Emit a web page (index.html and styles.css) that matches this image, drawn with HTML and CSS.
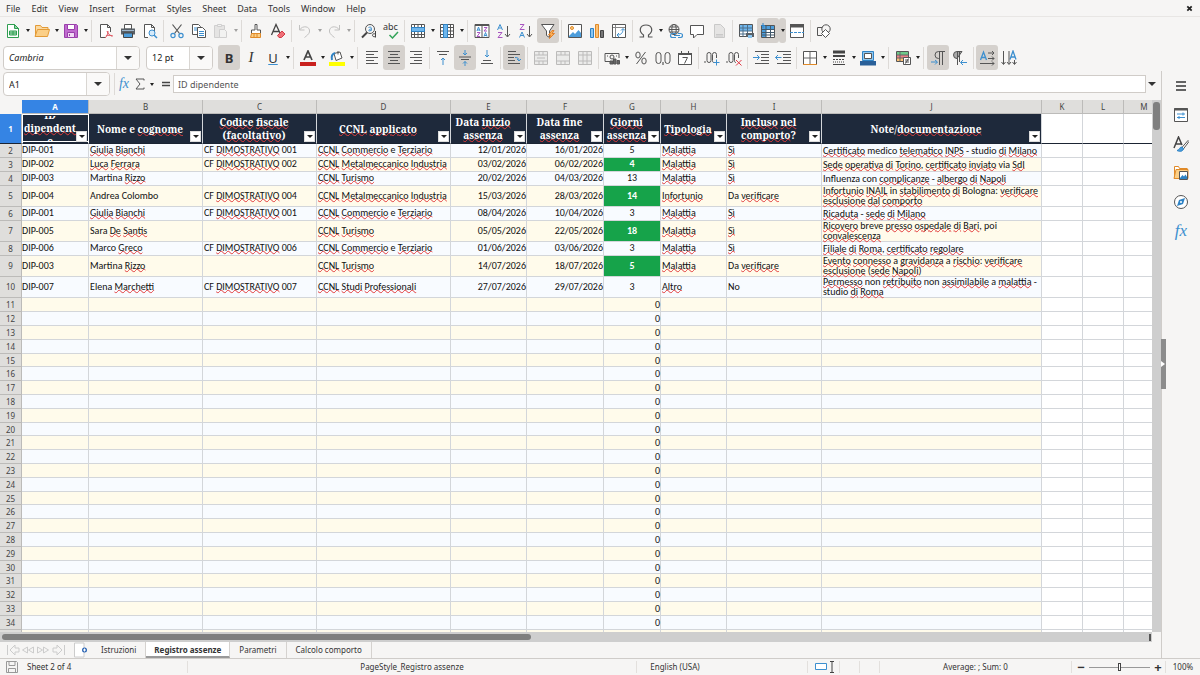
FILE: index.html
```html
<!DOCTYPE html>
<html lang="it">
<head>
<meta charset="utf-8">
<title>Registro assenze</title>
<link rel="stylesheet" href="styles.css">
</head>
<body class="app">
<nav class="menubar" aria-label="Menu">
<button class="menu">File</button><button class="menu">Edit</button><button class="menu">View</button><button class="menu">Insert</button><button class="menu">Format</button><button class="menu">Styles</button><button class="menu">Sheet</button><button class="menu">Data</button><button class="menu">Tools</button><button class="menu">Window</button><button class="menu">Help</button>
<button class="close" aria-label="Close"><svg viewBox="0 0 8 8" width="7" height="7"><path d="M1.500 1.500l5 5M6.500 1.500l-5 5" stroke="#222" stroke-width="2"/></svg></button>
</nav>

<div class="toolbar" role="toolbar" aria-label="Standard">
<button class="tool" aria-label="New"><svg viewBox="0 0 16 16"><path d="M2.500 1.500h7l4 4v9h-11z" fill="#fff" stroke="#2f9e50"/><path d="M9.500 1.500v4h4z" fill="#8fd6a5" stroke="#2f9e50"/><path d="M4.500 8h7v4h-7zM4.500 10h7M8 8v4" fill="#aee2bd" stroke="#2f9e50"/></svg></button><button class="arrow" aria-label="New options"></button>
<button class="tool" aria-label="Open"><svg viewBox="0 0 16 16"><path d="M1.500 13V2.500h5l1.500 2h6V7" fill="#fbd9a0" stroke="#e39b37"/><path d="M1 13.500L3.500 6.500h12l-2 7z" fill="#fbcf87" stroke="#e39b37"/></svg></button><button class="arrow" aria-label="Open options"></button>
<button class="tool" aria-label="Save"><svg viewBox="0 0 16 16"><path d="M1.500 1.500h12l1 1v12h-13z" fill="#c06bcf" stroke="#9a3fab"/><path d="M4.500 1.500h7v5h-7z" fill="#fff" stroke="#9a3fab"/><path d="M4.500 9.500h7v5h-7z" fill="#f1d9f5" stroke="#9a3fab"/><path d="M6 11h1v2H6z" fill="#9a3fab"/></svg></button><button class="arrow" aria-label="Save options"></button>
<span class="sep"></span>
<button class="tool" aria-label="Export as PDF"><svg viewBox="0 0 16 16" fill="none" stroke="#555"><path d="M2.500 14.500v-13h7l3 3V9M9.500 1.500v3h3M2.500 14.500h5" fill="#fff"/><path d="M9 8c1 3 3 5 6 5M10 8c0 3-1 5-3 7M8 13c2-1 4-1 6 0" stroke="#e05560"/></svg></button><button class="tool" aria-label="Print"><svg viewBox="0 0 16 16"><path d="M4.500 1.500h7V6h-7z" fill="#fff" stroke="#555"/><path d="M1 5.500h14v6H1z" fill="#596067"/><path d="M2 7h12v1H2z" fill="#9fb7cc"/><path d="M3.500 10h9v4.500h-9z" fill="#4c9ddb" stroke="#444"/></svg></button><button class="tool" aria-label="Print preview"><svg viewBox="0 0 16 16" fill="none" stroke="#555"><path d="M6 14.500H2.500v-13h7l3 3V8M9.500 1.500v3h3" fill="#fff"/><circle cx="10" cy="10" r="3" fill="#d5eafa" stroke="#3c8fcf"/><path d="M12 12l3 3" stroke="#3c8fcf" stroke-width="1.500"/></svg></button>
<span class="sep"></span>
<button class="tool" aria-label="Cut"><svg viewBox="0 0 16 16" fill="none" stroke="#555" stroke-width="1.200"><path d="M3.500 1.500l7 9M12.500 1.500l-7 9"/><g stroke="#3c8fcf"><circle cx="4" cy="12.500" r="2.100"/><circle cx="12" cy="12.500" r="2.100"/></g></svg></button><button class="tool" aria-label="Copy"><svg viewBox="0 0 16 16" fill="#fff" stroke="#555"><path d="M1.500 1.500h6l2 2v8h-8z"/><path d="M3 5h4M3 7h4" stroke="#3c8fcf"/><path d="M6.500 4.500h5l3 3v7h-8z"/><path d="M8 8.500h5M8 10.500h5M8 12.500h5" stroke="#3c8fcf"/></svg></button><button class="tool faded" aria-label="Paste" disabled><svg viewBox="0 0 16 16" stroke="#999" fill="#ccc"><path d="M1.500 2.500h10v12h-10z"/><path d="M4.500 1.500h4v2h-4z" fill="#eee"/><path d="M6.500 6.500h5l2 2v6h-7z" fill="#eee"/></svg></button><button class="arrow faded" aria-label="Paste options" disabled></button>
<span class="sep"></span>
<button class="tool" aria-label="Clone formatting"><svg viewBox="0 0 16 16" fill="none" stroke="#555"><path d="M7 1.500h2V7h3.500v3.500h-9V7H7z" fill="#fff"/><path d="M3.500 10.500h9v4h-10z" fill="#fbcf87" stroke="#e08a28"/><path d="M6 11v3M9 11v3" stroke="#e08a28"/></svg></button><button class="tool" aria-label="Clear formatting"><svg viewBox="0 0 16 16"><path d="M1.500 12L6 1.500 10 10M3 8.500h6" fill="none" stroke="#444" stroke-width="1.300"/><path d="M7.500 12.500l4.500-4.500 3 3-3.500 3.500H9z" fill="#ef7078" stroke="#d23b46"/></svg></button>
<span class="sep"></span>
<button class="tool faded" aria-label="Undo" disabled><svg viewBox="0 0 16 16" fill="none" stroke="#777"><path d="M2.500 2v5h5M2.500 7c3-5 11-4 10 2-.5 2-3 4-5 5.500"/></svg></button><button class="arrow faded" aria-label="Undo options" disabled></button>
<button class="tool faded" aria-label="Redo" disabled><svg viewBox="0 0 16 16" fill="none" stroke="#777"><path d="M13.500 2v5h-5M13.500 7c-3-5-11-4-10 2 .5 2 3 4 5 5.500"/></svg></button><button class="arrow faded" aria-label="Redo options" disabled></button>
<span class="sep"></span>
<button class="tool" aria-label="Find and replace"><svg viewBox="0 0 16 16" fill="none"><circle cx="9" cy="6" r="4.500" stroke="#555"/><path d="M6 9.500l-5 5" stroke="#444" stroke-width="2"/><path d="M7.500 4.500c3-1 3 0 3 3M10.500 6c-3 0-3.500 2-1.500 2l1.500-1" stroke="#3c8fcf"/><path d="M14.500 8v6.500M14.500 11c-4-1.500-4 4 0 2.500" stroke="#444"/></svg></button><button class="tool abc" aria-label="Spelling"><span>abc</span><svg viewBox="0 0 16 16"><path d="M6.500 12l3 3 5.500-6" fill="none" stroke="#35a45a" stroke-width="1.500"/></svg></button>
<span class="sep"></span>
<button class="tool" aria-label="Row"><svg viewBox="0 0 16 16" fill="#fff" stroke="#555"><path d="M1.500 1.500h13v13h-13z"/><path d="M4.500 1.500v13M8 1.500v13M11.500 1.500v13M1.500 11.500h13"/><path d="M1.500 4.500h13v4h-13z" fill="#6fb6ec" stroke="#2f83c5"/></svg></button><button class="arrow" aria-label="Row options"></button>
<button class="tool" aria-label="Column"><svg viewBox="0 0 16 16" fill="#fff" stroke="#555"><path d="M1.500 1.500h13v13h-13z"/><path d="M1.500 4.500h13M1.500 8h13M1.500 11.500h13M11.500 1.500v13"/><path d="M4.500 1.500h4v13h-4z" fill="#6fb6ec" stroke="#2f83c5"/></svg></button><button class="arrow" aria-label="Column options"></button>
<span class="sep"></span>
<button class="tool" aria-label="Sort"><svg viewBox="0 0 16 16" fill="none"><path d="M1 1.500h14v13H1zM8 3v12" fill="#fff" stroke="#555"/><path d="M1 2h14" stroke="#555" stroke-width="2"/><path d="M3 8l1.500-4L6 8M3.500 7h2M10 13.500l1.500-4 1.500 4M10.500 12.500h2" stroke="#3c8fcf"/><path d="M3 9.500h3l-3 4h3M10 4.500h3l-3 3.500h3" stroke="#a855c0"/></svg></button><button class="tool" aria-label="Sort ascending"><svg viewBox="0 0 16 16" fill="none"><path d="M1.500 7L4 1.500 6.500 7M2.500 5h3" stroke="#3c8fcf"/><path d="M2 9.500h4l-4 5h4.500" stroke="#a855c0"/><path d="M11.500 3v10.500M9 11l2.500 3 2.500-3" stroke="#555"/></svg></button><button class="tool" aria-label="Sort descending"><svg viewBox="0 0 16 16" fill="none"><path d="M1.500 14.500L4 9l2.500 5.500M2.500 12.500h3" stroke="#3c8fcf"/><path d="M2 1.500h4l-4 5h4.500" stroke="#a855c0"/><path d="M11.500 3v10.500M9 11l2.500 3 2.500-3" stroke="#555"/></svg></button><button class="tool on" aria-label="AutoFilter" aria-pressed="true"><svg viewBox="0 0 16 16"><path d="M1.500 1.500h12.500L9.500 8v6.500l-3-2V8z" fill="#fff" stroke="#555"/><path d="M12 7.500L8.500 12h2l-1 3.500 5-5h-2.500l2-3z" fill="#fbb25c" stroke="#e0802a"/></svg></button>
<span class="sep"></span>
<button class="tool" aria-label="Image"><svg viewBox="0 0 16 16"><path d="M1.500 1.500h13v13h-13z" fill="#fff" stroke="#555"/><circle cx="5" cy="5" r="1.500" fill="#fbcf87" stroke="#e08a28"/><path d="M2 13l4-4 2 2 3.500-4L14 10v4H2z" fill="#4c9ddb"/></svg></button><button class="tool" aria-label="Chart"><svg viewBox="0 0 16 16"><path d="M1.500 5.500h3v9h-3z" fill="#8cc6f0" stroke="#2f83c5"/><path d="M6.500 1.500h3v13h-3z" fill="#fbc176" stroke="#e08a28"/><path d="M11.500 7.500h3v7h-3z" fill="#777" stroke="#444"/></svg></button><button class="tool" aria-label="Pivot table"><svg viewBox="0 0 16 16" fill="none"><path d="M1.500 1.500h13v13h-13z" fill="#fff" stroke="#555"/><path d="M2 4.500h12M4.500 2v12" stroke="#888"/><path d="M6 12c4 0 6-2 6-6M10 7.500l2-2 2 2M8 10l-2 2 2 2" stroke="#3c8fcf"/></svg></button>
<span class="sep"></span>
<button class="tool" aria-label="Special character"><svg viewBox="0 0 16 16"><path d="M1.500 14h4v-2C0 8 2 2 8 2s8 6 2.500 10v2h4" fill="none" stroke="#555" stroke-width="1.200"/></svg></button><button class="arrow" aria-label="Special character options"></button>
<button class="tool" aria-label="Hyperlink"><svg viewBox="0 0 16 16" fill="none" stroke="#555"><circle cx="7" cy="6.500" r="5"/><ellipse cx="7" cy="6.500" rx="2.200" ry="5"/><path d="M2 6.500h10M3 4h8M3 9h8"/><path d="M9 10.500H5.500a2 2 0 0 0 0 4H9M11 10.500h2.500a2 2 0 0 1 0 4H11M7 12.500h6" stroke="#3c8fcf" stroke-width="1.200"/></svg></button><button class="tool" aria-label="Comment"><svg viewBox="0 0 16 16"><path d="M1.500 2.500h13v9H8L4.500 15v-3.500h-3z" fill="#fff" stroke="#555"/></svg></button><button class="tool faded" aria-label="Headers and footers" disabled><svg viewBox="0 0 16 16"><path d="M3.500 1.500h6l4 4v9h-10z" fill="#ccc" stroke="#888"/><path d="M5 11.500h7M5 13h7" stroke="#888"/></svg></button>
<span class="sep"></span>
<button class="tool" aria-label="Define print area"><svg viewBox="0 0 16 16"><path d="M1.500 1.500h13v12h-13z" fill="#fff" stroke="#555"/><path d="M2 2h12v6H2z" fill="#6fb6ec"/><path d="M1.500 5h13M1.500 8h13M1.500 11h13M5 1.500v12M9.500 1.500v12" stroke="#4c6f8b"/><path d="M8 10h8v4H8z" fill="#596067"/><path d="M10 12h4v3h-4z" fill="#8cc6f0"/></svg></button><button class="tool on" aria-label="Freeze rows and columns" aria-pressed="true"><svg viewBox="0 0 16 16"><path d="M1.500 2.500h13v12h-13z" fill="#fff" stroke="#555"/><path d="M2 3h12v3H2zM2 6h4v8H2z" fill="#4c9ddb"/><path d="M1.500 6.500h13M1.500 9.500h13M1.500 12h13M6 2.500v12M10.500 2.500v12" stroke="#40586b"/><path d="M3 0v5M1 2.500h4" stroke="#2f83c5"/></svg></button><button class="arrow on" aria-label="Freeze options"></button>
<button class="tool" aria-label="Split window"><svg viewBox="0 0 16 16"><path d="M1.500 1.500h13v13h-13z" fill="#fff" stroke="#555"/><path d="M1 1h14v3.500H1z" fill="#555"/><path d="M1 9.500h14" stroke="#3c8fcf" stroke-dasharray="3 1"/></svg></button>
<span class="sep"></span>
<button class="tool" aria-label="Draw functions"><svg viewBox="0 0 16 16" fill="none" stroke="#555"><path d="M6 12.500H1.500v-8h5"/><circle cx="10" cy="6" r="4.200"/><path d="M9.500 6.500l4 4-4 4-4-4z" fill="#fff"/></svg></button>
</div>

<div class="toolbar" role="toolbar" aria-label="Formatting">
<div class="combo font-name"><input aria-label="Font name" value="Cambria"><button class="drop" aria-label="Font list"></button></div>
<div class="combo font-size"><input aria-label="Font size" value="12 pt"><button class="drop" aria-label="Size list"></button></div>
<button class="tool on letter bold" aria-pressed="true">B</button><button class="tool letter italic">I</button><button class="tool letter underline">U</button><button class="arrow" aria-label="Underline options"></button>
<span class="sep"></span>
<button class="tool" aria-label="Font color"><svg viewBox="0 0 16 16"><path d="M4 10l4-9 4 9M5.500 7h5" fill="none" stroke="#444" stroke-width="1.700"/><path d="M0 12h16v4H0z" fill="#c9211e"/></svg></button><button class="arrow" aria-label="Font color options"></button>
<button class="tool" aria-label="Background color"><svg viewBox="0 0 16 16"><path d="M5 3.500l6-1.500 2 6-6 2.500z" fill="#fff" stroke="#555"/><path d="M9 4.500V1" stroke="#555"/><path d="M3 10C2 6 3 4 6 3" fill="none" stroke="#2f83c5" stroke-width="2"/><path d="M0 12h16v4H0z" fill="#ff0"/></svg></button><button class="arrow" aria-label="Background color options"></button>
<span class="sep"></span>
<button class="tool" aria-label="Align left"><svg viewBox="0 0 16 16" stroke="#555"><path d="M2 1.500h12M2 4.500h8M2 7.500h12M2 10.500h8M2 13.500h12"/></svg></button><button class="tool on" aria-label="Align center" aria-pressed="true"><svg viewBox="0 0 16 16" stroke="#555"><path d="M2 1.500h12M4 4.500h8M2 7.500h12M4 10.500h8M2 13.500h12"/></svg></button><button class="tool" aria-label="Align right"><svg viewBox="0 0 16 16" stroke="#555"><path d="M2 1.500h12M6 4.500h8M2 7.500h12M6 10.500h8M2 13.500h12"/></svg></button>
<span class="sep"></span>
<button class="tool" aria-label="Align top"><svg viewBox="0 0 16 16" fill="none"><path d="M2 1.500h12M4 4.500h8" stroke="#555"/><path d="M8 15V8M6 10l2-2 2 2" stroke="#3c8fcf"/></svg></button><button class="tool on" aria-label="Center vertically" aria-pressed="true"><svg viewBox="0 0 16 16" fill="none"><path d="M2 7h12M4 9.500h8" stroke="#555"/><path d="M8 0v5M6 3l2 2 2-2M8 16v-4.500M6 13.500l2-2 2 2" stroke="#3c8fcf"/></svg></button><button class="tool" aria-label="Align bottom"><svg viewBox="0 0 16 16" fill="none"><path d="M4 10.500h8M2 13.500h12" stroke="#555"/><path d="M8 0v7M6 5l2 2 2-2" stroke="#3c8fcf"/></svg></button>
<span class="sep"></span>
<button class="tool on" aria-label="Wrap text" aria-pressed="true"><svg viewBox="0 0 16 16" fill="none"><path d="M2 1.500h8M2 4.500h12M2 7.500h6M2 10.500h7M2 13.500h12" stroke="#555"/><path d="M9 7.500c3 0 4 1 4 3.500M11 9l2 2 2-2" stroke="#3c8fcf"/></svg></button>
<span class="sep"></span>
<button class="tool faded" aria-label="Merge and center" disabled><svg viewBox="0 0 16 16" fill="#ddd" stroke="#666"><path d="M1.500 1.500h13v13h-13zM1.500 5h13M1.500 11h13M6 1.500V5M10 1.500V5M6 11v3M10 11v3M4 8h8"/></svg></button><button class="tool faded" aria-label="Merge cells" disabled><svg viewBox="0 0 16 16" fill="#ddd" stroke="#666"><path d="M1.500 1.500h13v13h-13zM1.500 5h13M1.500 11h13M6 1.500V5M10 1.500V5M6 11v3M10 11v3"/></svg></button><button class="tool faded" aria-label="Unmerge cells" disabled><svg viewBox="0 0 16 16" fill="#ddd" stroke="#666"><path d="M1.500 1.500h13v13h-13zM1.500 5h13M1.500 11h13M6 1.500v13M10 1.500v13"/></svg></button>
<span class="sep"></span>
<button class="tool" aria-label="Currency"><svg viewBox="0 0 16 16" fill="none" stroke="#555"><path d="M9 11.500H1V3.500h14V8"/><circle cx="8" cy="7" r="2"/><path d="M3.500 5.500v1M12.500 5.500v1"/><path d="M6 11h3v3H6zM9.500 9h2.500v5H9.500zM13 10.500h2.500V14H13z" fill="#666"/></svg></button><button class="arrow" aria-label="Currency options"></button>
<button class="tool" aria-label="Percent"><svg viewBox="0 0 16 16" fill="none" stroke="#555"><ellipse cx="5" cy="5" rx="2.200" ry="3"/><ellipse cx="11" cy="11" rx="2.200" ry="3"/><path d="M12.500 2l-9 12"/></svg></button><button class="tool" aria-label="Number"><svg viewBox="0 0 16 16" fill="none" stroke="#555"><rect x="1" y="2.500" width="5" height="11" rx="2.500"/><rect x="10" y="2.500" width="5" height="11" rx="2.500"/><path d="M8 12v3" stroke-width="1.200"/></svg></button><button class="tool" aria-label="Date"><svg viewBox="0 0 16 16" fill="none" stroke="#555"><path d="M1.500 3.500h13v11h-13z" fill="#fff"/><path d="M1 4h14" stroke-width="2"/><path d="M4.500 1v3M11.500 1v3M5.500 7.500h5l-3 6"/></svg></button>
<span class="sep"></span>
<button class="tool" aria-label="Add decimal place"><svg viewBox="0 0 16 16" fill="none" stroke="#555"><path d="M1 11v2"/><rect x="3" y="2.500" width="4" height="10" rx="2"/><path d="M12.500 8V4.500a2 2 0 0 0-4 0v6c0 2 1 2 1.500 2"/><path d="M9.500 12.500h6M12.500 9.500v6" stroke="#3c8fcf"/></svg></button><button class="tool" aria-label="Delete decimal place"><svg viewBox="0 0 16 16" fill="none" stroke="#555"><path d="M1 11v2"/><rect x="3" y="2.500" width="4" height="10" rx="2"/><path d="M12.500 8V4.500a2 2 0 0 0-4 0v6c0 2 1 2 1.500 2"/><path d="M10 10l5.500 5.500M15.500 10L10 15.500" stroke="#e03b46"/></svg></button>
<span class="sep"></span>
<button class="tool" aria-label="Increase indent"><svg viewBox="0 0 16 16" fill="none"><path d="M2 1.500h14M8 4.500h8M8 7.500h8M8 10.500h8M2 13.500h14" stroke="#555"/><path d="M0 7.500h6M4 5l2.500 2.500L4 10" stroke="#3c8fcf"/></svg></button><button class="tool" aria-label="Decrease indent"><svg viewBox="0 0 16 16" fill="none"><path d="M2 1.500h14M8 4.500h8M8 7.500h8M8 10.500h8M2 13.500h14" stroke="#555"/><path d="M.5 7.500h6M3 5L.5 7.500 3 10" stroke="#3c8fcf"/></svg></button>
<span class="sep"></span>
<button class="tool" aria-label="Borders"><svg viewBox="0 0 16 16" fill="none"><path d="M1.500 1.500h13v13h-13z" fill="#fff" stroke="#555"/><path d="M8 2v12M2 8h12" stroke="#666"/><path d="M1 14.500h14" stroke="#e08a28"/></svg></button><button class="arrow" aria-label="Border options"></button>
<button class="tool" aria-label="Border style"><svg viewBox="0 0 16 16" stroke="#444"><path d="M2 2h12" stroke-width="3"/><path d="M2 6h12" stroke-width="2"/><path d="M2 9.500h12" stroke-dasharray="2 1"/><path d="M2 12h12" stroke-dasharray="1 1"/><path d="M2 14.500h12"/></svg></button><button class="arrow" aria-label="Border style options"></button>
<button class="tool" aria-label="Border color"><svg viewBox="0 0 16 16"><path d="M2.500 1.500h11v9h-11z" fill="#8cc6f0" stroke="#2f83c5"/><path d="M4.500 3.500h7v5h-7z" fill="#fff" stroke="#555"/><path d="M0 11h16v4.500H0z" fill="#2a6099"/></svg></button><button class="arrow" aria-label="Border color options"></button>
<span class="sep"></span>
<button class="tool" aria-label="Conditional formatting"><svg viewBox="0 0 16 16"><path d="M1.500 1.500h12v10h-12z" fill="#fff" stroke="#555"/><path d="M2 2h11v3H2z" fill="#6ec98a"/><path d="M2 5h11v3H2z" fill="#ef8088"/><path d="M2 8h11v3H2z" fill="#fbc176"/><path d="M1.500 5h12M1.500 8h12M5 1.500v10" stroke="#666"/><path d="M8.500 7.500h7v7h-7z" fill="#fff" stroke="#555"/><path d="M10 10h4M10 12h4M13.500 8.500l-3 5" stroke="#555"/></svg></button><button class="arrow" aria-label="Conditional options"></button>
<span class="sep"></span>
<button class="tool on" aria-label="Left to right" aria-pressed="true"><svg viewBox="0 0 16 16" fill="none" stroke="#555"><path d="M9.500 15V1.500M12.500 15V1.500M15 1.500H8.500a3.500 3.500 0 0 0 0 7H9"/><path d="M1 12h6M5 10l2.500 2L5 14.500" stroke="#3c8fcf"/></svg></button><button class="tool" aria-label="Right to left"><svg viewBox="0 0 16 16" fill="none" stroke="#555"><path d="M5.500 15V1.500M7.500 12V1.500M10 1.500H5a3.500 3.500 0 0 0 0 7z" fill="#aaa"/><path d="M9 12.500h6M11 10l-2.500 2.500L11 15" stroke="#3c8fcf"/></svg></button>
<span class="sep"></span>
<button class="tool on" aria-label="Text left to right" aria-pressed="true"><svg viewBox="0 0 16 16" fill="none" stroke="#555"><path d="M1.500 10L4.500 2l3 8M2.500 7.500h4" stroke="#3c8fcf" stroke-width="1.300"/><path d="M9 3h6M13 1l2 2-2 2M9 8.500h6M13 6.500l2 2-2 2M1 13.500h14M13 11.500l2 2-2 2"/></svg></button><button class="tool" aria-label="Text top to bottom"><svg viewBox="0 0 16 16" fill="none" stroke="#555"><path d="M9 9.500L12 1l3 8.500M10 7h4" stroke="#3c8fcf" stroke-width="1.300"/><path d="M2.500 1v13M.5 12l2 2.500 2-2.500M8 1v13M6 12l2 2.500 2-2.500M13.500 10v4M11.500 12l2 2.500 2-2.500"/></svg></button>
</div>

<div class="workspace">
<main class="document">
<div class="formula-bar">
<div class="combo name-box"><input aria-label="Name box" value="A1"><button class="drop" aria-label="Cell names"></button></div>
<span class="sep"></span>
<button class="fx" aria-label="Function wizard"><i>f</i><i>x</i></button>
<button class="sigma" aria-label="Select function"><svg viewBox="0 0 10 12"><path d="M9 2.500V1H1l4 5-4 5h8V9.500" fill="none" stroke="#555"/></svg></button><button class="arrow" aria-label="Function options"></button>
<button class="equals" aria-label="Formula"><svg viewBox="0 0 10 8"><path d="M1 2.500h8M1 5.500h8" stroke="#444" stroke-width="1.500"/></svg></button>
<input class="formula" aria-label="Input line" value="ID dipendente"><button class="drop plain" aria-label="Expand formula bar"></button>
</div>
<div class="grid-area">
<div class="grid">
<table class="sheet">
<colgroup><col class="c-row"><col class="c-a"><col class="c-b"><col class="c-c"><col class="c-d"><col class="c-e"><col class="c-f"><col class="c-g"><col class="c-h"><col class="c-i"><col class="c-j"><col class="c-k"><col class="c-k"><col class="c-k"></colgroup>
<thead><tr><td class="corner"></td><th class="current">A</th><th>B</th><th>C</th><th>D</th><th>E</th><th>F</th><th>G</th><th>H</th><th>I</th><th>J</th><th>K</th><th>L</th><th>M</th></tr></thead>
<tbody>
<tr class="titles"><th class="current">1</th><td class="active"><div class="title">ID <u>dipendent</u> e</div><button class="filter" aria-label="Filter A"></button></td><td><div class="title">Nome e <u>cognome</u></div><button class="filter" aria-label="Filter B"></button></td><td><div class="title"><u>Codice</u> <u>fiscale</u> (<u>facoltativo</u>)</div><button class="filter" aria-label="Filter C"></button></td><td><div class="title"><u>CCNL</u> <u>applicato</u></div><button class="filter" aria-label="Filter D"></button></td><td><div class="title">Data <u>inizio</u> <u>assenza</u></div><button class="filter" aria-label="Filter E"></button></td><td><div class="title">Data fine <u>assenza</u></div><button class="filter" aria-label="Filter F"></button></td><td><div class="title"><u>Giorni</u> <u>assenza</u></div><button class="filter" aria-label="Filter G"></button></td><td><div class="title"><u>Tipologia</u></div><button class="filter" aria-label="Filter H"></button></td><td><div class="title"><u>Incluso</u> <u>nel</u> <u>comporto</u>?</div><button class="filter" aria-label="Filter I"></button></td><td><div class="title">Note/<u>documentazione</u></div><button class="filter" aria-label="Filter J"></button></td><td><td><td></tr>
<tr><th>2<td>DIP-001<td><u>Giulia</u> <u>Bianchi</u><td>CF <u>DIMOSTRATIVO</u> 001<td><u>CCNL</u> <u>Commercio</u> e <u>Terziario</u><td>12/01/2026<td>16/01/2026<td>5<td><u>Malattia</u><td><u>Sì</u><td><u>Certificato</u> medico <u>telematico</u> <u>INPS</u> - studio <u>di</u> <u>Milano</u><td><td><td></tr>
<tr><th>3<td>DIP-002<td><u>Luca</u> <u>Ferrara</u><td>CF <u>DIMOSTRATIVO</u> 002<td><u>CCNL</u> <u>Metalmeccanico</u> <u>Industria</u><td>03/02/2026<td>06/02/2026<td class="flag">4<td><u>Malattia</u><td><u>Sì</u><td><u>Sede</u> <u>operativa</u> <u>di</u> <u>Torino</u>, <u>certificato</u> <u>inviato</u> via <u>SdI</u><td><td><td></tr>
<tr><th>4<td>DIP-003<td>Martina <u>Rizzo</u><td><td><u>CCNL</u> <u>Turismo</u><td>20/02/2026<td>04/03/2026<td>13<td><u>Malattia</u><td><u>Sì</u><td>Influenza con <u>complicanze</u> - <u>albergo</u> <u>di</u> <u>Napoli</u><td><td><td></tr>
<tr class="tall"><th>5<td>DIP-004<td>Andrea Colombo<td>CF <u>DIMOSTRATIVO</u> 004<td><u>CCNL</u> <u>Metalmeccanico</u> <u>Industria</u><td>15/03/2026<td>28/03/2026<td class="flag">14<td><u>Infortunio</u><td>Da <u>verificare</u><td><u>Infortunio</u> <u>INAIL</u> in <u>stabilimento</u> <u>di</u> Bologna: <u>verificare</u> <u>esclusione</u> <u>dal</u> <u>comporto</u><td><td><td></tr>
<tr><th>6<td>DIP-001<td><u>Giulia</u> <u>Bianchi</u><td>CF <u>DIMOSTRATIVO</u> 001<td><u>CCNL</u> <u>Commercio</u> e <u>Terziario</u><td>08/04/2026<td>10/04/2026<td>3<td><u>Malattia</u><td><u>Sì</u><td><u>Ricaduta</u> - <u>sede</u> <u>di</u> <u>Milano</u><td><td><td></tr>
<tr class="tall"><th>7<td>DIP-005<td>Sara <u>De</u> <u>Santis</u><td><td><u>CCNL</u> <u>Turismo</u><td>05/05/2026<td>22/05/2026<td class="flag">18<td><u>Malattia</u><td><u>Sì</u><td><u>Ricovero</u> breve <u>presso</u> <u>ospedale</u> <u>di</u> <u>Bari</u>, poi <u>convalescenza</u><td><td><td></tr>
<tr><th>8<td>DIP-006<td>Marco <u>Greco</u><td>CF <u>DIMOSTRATIVO</u> 006<td><u>CCNL</u> <u>Commercio</u> e <u>Terziario</u><td>01/06/2026<td>03/06/2026<td>3<td><u>Malattia</u><td><u>Sì</u><td><u>Filiale</u> <u>di</u> <u>Roma</u>, <u>certificato</u> <u>regolare</u><td><td><td></tr>
<tr class="tall"><th>9<td>DIP-003<td>Martina <u>Rizzo</u><td><td><u>CCNL</u> <u>Turismo</u><td>14/07/2026<td>18/07/2026<td class="flag">5<td><u>Malattia</u><td>Da <u>verificare</u><td><u>Evento</u> <u>connesso</u> a <u>gravidanza</u> a <u>rischio</u>: <u>verificare</u> <u>esclusione</u> (<u>sede</u> <u>Napoli</u>)<td><td><td></tr>
<tr class="tall"><th>10<td>DIP-007<td>Elena <u>Marchetti</u><td>CF <u>DIMOSTRATIVO</u> 007<td><u>CCNL</u> <u>Studi</u> <u>Professionali</u><td>27/07/2026<td>29/07/2026<td>3<td><u>Altro</u><td>No<td><u>Permesso</u> non <u>retribuito</u> non <u>assimilabile</u> a <u>malattia</u> - studio <u>di</u> <u>Roma</u><td><td><td></tr>
</tbody>
<tbody class="blank">
<tr><th>11<td><td><td><td><td><td><td>0<td><td><td><td><td><td></tr>
<tr><th>12<td><td><td><td><td><td><td>0<td><td><td><td><td><td></tr>
<tr><th>13<td><td><td><td><td><td><td>0<td><td><td><td><td><td></tr>
<tr><th>14<td><td><td><td><td><td><td>0<td><td><td><td><td><td></tr>
<tr><th>15<td><td><td><td><td><td><td>0<td><td><td><td><td><td></tr>
<tr><th>16<td><td><td><td><td><td><td>0<td><td><td><td><td><td></tr>
<tr><th>17<td><td><td><td><td><td><td>0<td><td><td><td><td><td></tr>
<tr><th>18<td><td><td><td><td><td><td>0<td><td><td><td><td><td></tr>
<tr><th>19<td><td><td><td><td><td><td>0<td><td><td><td><td><td></tr>
<tr><th>20<td><td><td><td><td><td><td>0<td><td><td><td><td><td></tr>
<tr><th>21<td><td><td><td><td><td><td>0<td><td><td><td><td><td></tr>
<tr><th>22<td><td><td><td><td><td><td>0<td><td><td><td><td><td></tr>
<tr><th>23<td><td><td><td><td><td><td>0<td><td><td><td><td><td></tr>
<tr><th>24<td><td><td><td><td><td><td>0<td><td><td><td><td><td></tr>
<tr><th>25<td><td><td><td><td><td><td>0<td><td><td><td><td><td></tr>
<tr><th>26<td><td><td><td><td><td><td>0<td><td><td><td><td><td></tr>
<tr><th>27<td><td><td><td><td><td><td>0<td><td><td><td><td><td></tr>
<tr><th>28<td><td><td><td><td><td><td>0<td><td><td><td><td><td></tr>
<tr><th>29<td><td><td><td><td><td><td>0<td><td><td><td><td><td></tr>
<tr><th>30<td><td><td><td><td><td><td>0<td><td><td><td><td><td></tr>
<tr><th>31<td><td><td><td><td><td><td>0<td><td><td><td><td><td></tr>
<tr><th>32<td><td><td><td><td><td><td>0<td><td><td><td><td><td></tr>
<tr><th>33<td><td><td><td><td><td><td>0<td><td><td><td><td><td></tr>
<tr><th>34<td><td><td><td><td><td><td>0<td><td><td><td><td><td></tr>
<tr><th><td><td><td><td><td><td><td><td><td><td><td><td><td></tr>
</tbody>
</table>
</div>
<div class="v-scroll"><div class="v-thumb"></div></div>
</div>
<div class="h-scroll"><div class="h-thumb"></div><div class="h-grip"></div></div>
<div class="tabs">
<div class="tab-nav"><button aria-label="First sheet"><svg viewBox="0 0 14 12"><path d="M1 1v10M3.500 6l5-5v3h4v4h-4v3z"/></svg></button><button aria-label="Previous sheet"><svg viewBox="0 0 14 12"><path d="M1 6l5-3v6zM7 6l5-3v6z"/></svg></button><button aria-label="Next sheet"><svg viewBox="0 0 14 12"><path d="M12 6L7 3v6zM6 6L1 3v6z"/></svg></button><button aria-label="Last sheet"><svg viewBox="0 0 14 12"><path d="M13 1v10M10.500 6l-5-5v3h-4v4h4v3z"/></svg></button></div>
<button class="add" aria-label="Add sheet"><svg viewBox="0 0 14 16"><path d="M.5 1v14H10V1z" fill="#fff" stroke="#ccc"/><circle cx="10.500" cy="8" r="2.500" fill="#2a64b4"/><path d="M9 8h3M10.500 6.500v3" stroke="#fff"/></svg></button>
<button class="tab">Istruzioni</button><button class="tab chosen">Registro assenze</button><button class="tab">Parametri</button><button class="tab">Calcolo comporto</button>
</div>
</main>
<aside class="sidebar" aria-label="Sidebar">
<button class="side-handle" aria-label="Hide sidebar"><svg viewBox="0 0 4 6" width="4" height="6"><path d="M0 0l4 3-4 3z" fill="#fff"/></svg></button>
<button class="side" aria-label="Sidebar settings"><svg viewBox="0 0 16 16"><path d="M3 4h10M3 8h10M3 12h10" stroke="#333" stroke-width="1.500"/></svg></button>
<button class="side" aria-label="Properties"><svg viewBox="0 0 16 16" fill="none"><path d="M1.500 1.500h13v13h-13z" fill="#fff" stroke="#555"/><path d="M1 2.500h14" stroke="#555" stroke-width="2"/><path d="M4 7h8M10 5.500v3M4 10.500h8M6 9v3" stroke="#3c8fcf"/></svg></button>
<button class="side" aria-label="Styles"><svg viewBox="0 0 16 16" fill="none"><path d="M1 12L5.500 1 9 9M2.500 8H8" stroke="#444" stroke-width="1.500"/><path d="M15 4.500L8.500 12l1.500 1.500L16 5.500z" fill="#fff" stroke="#555"/><path d="M9 11c-3 0-2 3-5 3.500 3 1.500 6 1 6.500-2z" fill="#4c9ddb" stroke="#2f83c5"/></svg></button>
<button class="side" aria-label="Gallery"><svg viewBox="0 0 16 16"><path d="M1.500 14V1.500h4l1 2h8" fill="#fff" stroke="#e08a28"/><path d="M1 13.500l2-9h12v9z" fill="#fbcf87" stroke="#e08a28"/><path d="M6.500 6.500h8v8h-8z" fill="#fff" stroke="#555"/><path d="M7 13l2.500-3 1.500 1.500 1.500-2L14 12v2H7z" fill="#2f83c5"/></svg></button>
<button class="side" aria-label="Navigator"><svg viewBox="0 0 16 16"><circle cx="8" cy="8" r="6.500" fill="#fff" stroke="#555"/><path d="M12 4l-2 6-6 2 2-6z" fill="#2f83c5"/><circle cx="8" cy="8" r="1" fill="#fff"/></svg></button>
<button class="side fx" aria-label="Functions"><i>f</i><i>x</i></button>
</aside>
</div>

<footer class="status">
<span class="s-save"><svg viewBox="0 0 12 12"><path d="M.5 .5h10l1 1v10H.5zM3 .5v4h6v-4M2.500 11.500v-4h7v4" fill="none" stroke="#999"/></svg></span>
<span class="s-sheet">Sheet 2 of 4</span>
<span class="s-style">PageStyle_Registro assenze</span>
<span class="s-lang">English (USA)</span>
<span class="s-ins"></span>
<span class="s-sel"><svg viewBox="0 0 20 12"><path d="M.5 2.500h11v6H.5z" fill="#fff" stroke="#3c8fcf"/><path d="M15 .5h4M15 11.500h4M17 .5v11" stroke="#444"/></svg></span>
<span class="s-gap"></span><span class="s-gap"></span>
<span class="s-sum">Average: ; Sum: 0</span>
<span class="s-zoom"><button aria-label="Zoom out">−</button><input type="range" aria-label="Zoom" min="0" max="100" value="50"><button aria-label="Zoom in">+</button></span>
<span class="s-pct">100%</span>
</footer>
</body>
</html>
```

FILE: styles.css
```css
* { box-sizing: border-box; }

.app {
  margin: 0;
  height: 100vh;
  display: flex;
  flex-direction: column;
  overflow: hidden;
  background: #f6f5f4;
  color: #333;
  font-family: "Noto Sans", "Open Sans", sans-serif;
  font-size: 9px;
}

button, input {
  margin: 0;
  padding: 0;
  border: 0;
  background: none;
  color: inherit;
  font: inherit;
}

svg { display: block; }

/* Menu bar */
.menubar {
  flex: none;
  display: flex;
  align-items: center;
  height: 17px;
  padding-left: 1px;
  border-bottom: 1px solid #e8e6e4;
}
.menu { padding: 0 6px 0 5px; }
.close { margin-left: auto; padding-right: 7px; }

/* Toolbars */
.toolbar {
  flex: none;
  display: flex;
  align-items: center;
  height: 27px;
  padding-left: 2px;
}
.tool {
  flex: none;
  display: flex;
  align-items: center;
  justify-content: center;
  position: relative;
  width: 22px;
  height: 25px;
}
.tool svg { width: 16px; height: 16px; }
.on { background: #d5d1cd; border-radius: 3px; }
.faded { opacity: 0.4; }
.arrow {
  flex: none;
  display: flex;
  align-items: center;
  justify-content: center;
  width: 7px;
  height: 25px;
}
.arrow::after {
  content: "";
  border: 2px solid transparent;
  border-top: 3px solid #222;
  border-bottom: 0;
}
.sep {
  flex: none;
  width: 5px;
  height: 22px;
  background: linear-gradient(#dddad7, #dddad7) 2px 0 / 1px 100% no-repeat;
}
.arrow + .sep { width: 6px; }
.abc span {
  position: absolute;
  top: 2px;
  left: 3px;
  font-size: 9px;
}
.letter { font-size: 13px; }
.bold { font-weight: 700; }
.italic { font-family: "Liberation Serif", serif; font-style: italic; font-size: 15px; }
.underline { text-decoration: underline; text-decoration-color: #3c8fcf; }

.combo {
  flex: none;
  display: flex;
  height: 24px;
  border: 1px solid #d0ccc8;
  border-radius: 4px;
  background: #fff;
  overflow: hidden;
}
.combo input {
  flex: 1;
  min-width: 0;
  padding-left: 5px;
  color: #222;
}
.drop {
  flex: none;
  display: flex;
  align-items: center;
  justify-content: center;
  width: 23px;
  border-left: 1px solid #d9d6d2;
  background: #faf9f8;
}
.drop::after {
  content: "";
  border: 4px solid transparent;
  border-top-color: #333;
  border-bottom: 0;
}
.plain { width: 12px; border: 0; background: none; }
.font-name { width: 137px; margin: 0 6px 0 1px; }
.font-name input { font-style: italic; }
.font-size { width: 67px; margin-right: 5px; }

/* Document and sidebar */
.workspace { flex: 1; min-height: 0; display: flex; }
.document { flex: 1; min-width: 0; display: flex; flex-direction: column; }
.formula-bar {
  flex: none;
  display: flex;
  align-items: center;
  height: 29px;
  padding: 0 3px 3px;
}
.name-box { width: 107px; margin-right: 2px; }
.fx {
  color: #3c8fcf;
  font-family: "Liberation Serif", serif;
  font-size: 14px;
  line-height: 14px;
}
.formula-bar .fx { width: 14px; }
.sigma { width: 17px; padding: 0 4px; }
.sigma svg { width: 10px; height: 12px; }
.equals { width: 18px; padding-left: 6px; }
.equals svg { width: 10px; height: 8px; }
.formula {
  flex: 1;
  min-width: 0;
  height: 18px;
  padding-left: 4px;
  border: 1px solid #d0ccc8;
  background: #fff;
  color: #555;
}

.grid-area { flex: 1; min-height: 0; display: flex; }
.grid { flex: 1; min-width: 0; overflow: hidden; background: #fff; }
.v-scroll { flex: none; width: 9px; padding: 2px 1px; background: #cecece; }
.v-thumb { height: 28px; border-radius: 3px; background: #7f7f7f; }
.h-scroll {
  flex: none;
  display: flex;
  align-items: center;
  height: 10px;
  margin-right: 9px;
  padding: 0 1px 0 2px;
  background: #cecece;
}
.h-thumb { width: 46%; height: 6px; border-radius: 3px; background: #7f7f7f; }
.h-grip { width: 2px; height: 7px; margin-left: auto; background: #555; }

/* Spreadsheet */
.sheet {
  width: 1165px;
  table-layout: fixed;
  border-collapse: separate;
  border-spacing: 0;
  color: #111;
  font-family: Carlito, Lato, sans-serif;
  font-size: 10px;
  line-height: 12px;
}
.c-row { width: 22px; }
.c-a { width: 67px; }
.c-b { width: 114px; }
.c-c { width: 114px; }
.c-d { width: 134px; }
.c-e { width: 76px; }
.c-f { width: 77px; }
.c-g { width: 57px; }
.c-h { width: 66px; }
.c-i { width: 95px; }
.c-j { width: 220px; }
.c-k { width: 41px; }
.sheet th, .sheet td {
  height: 14px;
  padding: 0 1px;
  border-right: 1px solid #d3d6da;
  border-bottom: 1px solid #d3d6da;
}
.sheet th {
  padding: 0;
  background: #dfdedc;
  border-color: #bcbbb9;
  color: #444;
  font-family: "Noto Sans", sans-serif;
  font-size: 8px;
  font-weight: 400;
  text-align: center;
}
.sheet .current { background: #3584e4; color: #fff; font-weight: 700; }
.sheet .corner { background: #f6f5f4; border-color: #f6f5f4; }
.sheet tbody td { padding-bottom: 1px; background: #f8fbff; white-space: nowrap; }
.sheet tbody tr:nth-child(odd) td { background: #fffbeb; }
.sheet tbody td:nth-child(n+12), .sheet tbody tr:nth-child(odd) td:nth-child(n+12) { background: #fff; }
.sheet td:nth-child(2) { padding-left: 0; }
.sheet td:nth-child(6), .sheet td:nth-child(7) { padding-right: 0; text-align: right; }
.sheet td:nth-child(8) { text-align: center; }
.sheet tbody td:nth-child(11) { padding-bottom: 0; line-height: 10px; white-space: normal; }
.sheet .blank td:nth-child(8) { padding: 0; text-align: right; }
.sheet .blank tr:nth-child(5n) > * { height: 13px; line-height: 11px; }
.sheet .tall > * { height: 21px; }
.sheet tbody .flag.flag { background: #16a34a; color: #fff; font-weight: 700; }
.sheet .titles > * { height: 30px; border-bottom: 1px solid #1b2433; }
.sheet tbody .titles td { position: relative; }
.sheet tbody .titles td:nth-child(-n+11) {
  padding: 1px 0 0 1px;
  background: #1e293b;
  color: #fff;
  text-align: center;
  white-space: normal;
}
.sheet tbody .titles td.active { padding: 0; border: 1px solid #fff; border-bottom-color: #1b2433; }
.title {
  display: flow-root;
  max-height: 28px;
  margin-right: 12px;
  overflow: hidden;
  font-family: "Noto Serif", "DejaVu Serif Condensed", "DejaVu Serif", serif;
  font-size: 10px;
  font-weight: 700;
  line-height: 13px;
}
.active .title {
  display: flex;
  flex-direction: column;
  justify-content: center;
  height: 26px;
  border-bottom: 1px solid #fff;
  margin-right: 0;
  padding-right: 11px;
}
.filter {
  position: absolute;
  right: 1px;
  bottom: 1px;
  display: flex;
  align-items: center;
  justify-content: center;
  width: 11px;
  height: 11px;
  border: 1px solid #ddd;
  background: #fff;
}
.filter::after {
  content: "";
  border: 3px solid transparent;
  border-top-color: #222;
  border-bottom: 0;
}
.sheet u {
  text-decoration: underline wavy #e23b3b 1px;
  text-decoration-skip-ink: none;
  text-underline-offset: -1px;
}

/* Sheet tabs */
.tabs { flex: none; display: flex; align-items: stretch; height: 16px; font-size: 8px; }
.tab-nav { display: flex; align-items: center; width: 74px; padding-left: 6px; }
.tab-nav svg { width: 15px; height: 12px; fill: none; stroke: #ccc; }
.add { width: 18px; }
.add svg { width: 14px; height: 16px; }
.tab { padding: 0 9px 2px; border-right: 1px solid #d5d2cf; }
.chosen { padding: 0 8px; border-bottom: 2px solid #999; background: #fff; font-weight: 700; }

/* Sidebar */
.sidebar {
  flex: none;
  position: relative;
  display: flex;
  flex-direction: column;
  align-items: center;
  width: 39px;
  border-left: 1px solid #cfccc9;
}
.side { display: flex; align-items: center; justify-content: center; width: 24px; height: 29px; }
.side svg { width: 16px; height: 16px; }
.side.fx { font-size: 17px; }
.side-handle {
  position: absolute;
  left: -1px;
  top: 268px;
  width: 5px;
  height: 50px;
  background: #8c8c8c;
}

/* Status bar */
.status {
  flex: none;
  display: flex;
  align-items: center;
  height: 17px;
  border-top: 1px solid #cfccc9;
  font-size: 8px;
}
.status > span { height: 12px; line-height: 12px; border-right: 1px solid #e3e0dd; text-align: center; white-space: nowrap; }
.status > .s-save { width: 24px; padding-left: 6px; border: 0; }
.s-save svg { width: 12px; height: 12px; }
.status > .s-sheet { width: 164px; padding-left: 3px; text-align: left; }
.status > .s-style { width: 449px; }
.status > .s-lang { width: 76px; border: 0; }
.status > .s-ins { width: 95px; }
.status > .s-sel { width: 32px; padding-left: 7px; }
.s-sel svg { width: 20px; height: 12px; }
.status > .s-gap { width: 20px; }
.status > .s-sum { flex: 1; }
.status > .s-zoom { display: flex; align-items: center; gap: 4px; width: 94px; padding: 0 3px 0 5px; font-size: 13px; font-weight: 700; }
.s-zoom button { width: 8px; line-height: 12px; }
.s-zoom input { flex: 1; min-width: 0; appearance: none; height: 1px; background: #999; }
.s-zoom input::-webkit-slider-thumb {
  appearance: none;
  width: 3px;
  height: 8px;
  border: 1px solid #444;
  background: #fff;
}
.status > .s-pct { width: 34px; border: 0; }
```
